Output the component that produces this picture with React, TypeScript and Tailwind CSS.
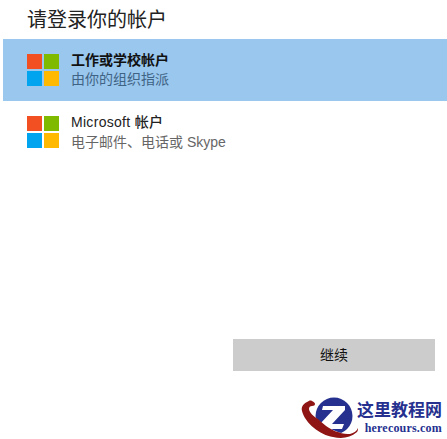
const cjk = "font-['Liberation_Sans','Noto_Sans_CJK_SC',sans-serif]";

const MsLogo = () => (
  <div className="grid grid-cols-[15px_15px] grid-rows-[15px_15px] gap-0.5 shrink-0">
    <div className="bg-[#f25022]" />
    <div className="bg-[#7fba00]" />
    <div className="bg-[#00a4ef]" />
    <div className="bg-[#ffb900]" />
  </div>
);

const SiteLogo = () => (
  <svg width="60" height="43" viewBox="0 0 60 43" className="shrink-0">
    <circle cx="36" cy="20" r="18.5" fill="#25308f" />
    <path d="M25 10h22v4L34 28h12l-2 5H21v-4l14-15h-11z" fill="#fff" />
    <path d="M6 12C9 24 24 38 44 41l4-3C30 35 15 22 11 11z" fill="#fff" />
    <path d="M14 5c-2-1-3 0-5 1C5 8 3 11 4 15c3 12 18 24 31 26 9 2 17 1 24-5 1-1 1-3 1-4-1 3-4 5-8 6-3 0-7 0-12-2-5-1-13-6-20-13C16 21 11 16 11 13c0-2 1-3 3-3 2 0 3-1 3-2s-1-2-3-3z" fill="#8f1414" />
  </svg>
);

export default function App() {
  return (
    <div className={`w-[447px] h-[439px] bg-white overflow-hidden flex flex-col ${cjk}`}>
      <h1 className="shrink-0 pl-[27px] pt-[5px] h-[39px] text-[20px] leading-[30px] font-normal text-[#222]">请登录你的帐户</h1>
      <div className="shrink-0 ml-[3px] h-[62px] bg-[#99c7ee] flex items-center pl-[24px] gap-[12px]">
        <MsLogo />
        <div className="text-[14px] leading-[19px]">
          <div className="font-bold text-[#111]">工作或学校帐户</div>
          <div className="text-[#3f6384]">由你的组织指派</div>
        </div>
      </div>
      <div className="shrink-0 mt-[11px] ml-[3px] flex items-center pl-[24px] gap-[12px]">
        <MsLogo />
        <div className="text-[14px] leading-[20px]">
          <div className="font-medium text-[#222] tracking-[0.3px]">Microsoft 帐户</div>
          <div className="text-[#666]">电子邮件、电话或 Skype</div>
        </div>
      </div>
      <div className="shrink-0 mt-[187px] ml-[233px] w-[202px] h-[32px] bg-[#cccccc] flex items-center justify-center text-[14px] text-[#111]">继续</div>
      <div className="shrink-0 mt-[25px] ml-[298px] flex items-start">
        <SiteLogo />
        <div className="ml-[-1px] pt-[3px] flex flex-col items-end gap-[3px]">
          <div className="text-[17px] leading-[20px] font-bold text-[#25308f] font-['Noto_Sans_CJK_SC',serif] whitespace-nowrap">这里教程网</div>
          <div className="text-[12px] leading-[12px] font-bold text-[#25308f] font-['Liberation_Serif',serif] tracking-[0.2px] whitespace-nowrap">herecours.com</div>
        </div>
      </div>
    </div>
  );
}
